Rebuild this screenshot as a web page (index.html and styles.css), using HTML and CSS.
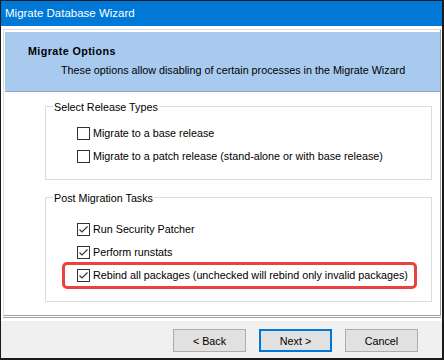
FILE: index.html
```html
<!DOCTYPE html>
<html>
<head>
<meta charset="utf-8">
<link rel="stylesheet" href="styles.css">
</head>
<body>
<div class="window">
  <div class="titlebar">Migrate Database Wizard</div>
  <div class="client">
    <div class="panel">
      <div class="header">
        <div class="header-title">Migrate Options</div>
        <div class="header-sub">These options allow disabling of certain processes in the Migrate Wizard</div>
      </div>
      <div class="group group-release">
        <div class="group-title">Select Release Types</div>
        <div class="rows rows-release">
          <div class="row"><span class="box"></span><span class="label">Migrate to a base release</span></div>
          <div class="row"><span class="box"></span><span class="label">Migrate to a patch release (stand-alone or with base release)</span></div>
        </div>
      </div>
      <div class="group group-post">
        <div class="group-title">Post Migration Tasks</div>
        <div class="rows rows-post">
          <div class="row"><span class="box checked"><svg viewBox="0 0 11 11" width="11" height="11"><polyline points="1.5,5.5 4,8 9.5,2.5" fill="none" stroke="#333" stroke-width="1.2"/></svg></span><span class="label">Run Security Patcher</span></div>
          <div class="row"><span class="box checked"><svg viewBox="0 0 11 11" width="11" height="11"><polyline points="1.5,5.5 4,8 9.5,2.5" fill="none" stroke="#333" stroke-width="1.2"/></svg></span><span class="label">Perform runstats</span></div>
          <div class="row row-highlight"><span class="box checked"><svg viewBox="0 0 11 11" width="11" height="11"><polyline points="1.5,5.5 4,8 9.5,2.5" fill="none" stroke="#333" stroke-width="1.2"/></svg></span><span class="label">Rebind all packages (unchecked will rebind only invalid packages)</span><span class="highlight"></span></div>
        </div>
      </div>
    </div>
    <div class="separator"></div>
    <div class="footer">
      <button class="btn">&lt; Back</button>
      <button class="btn btn-default">Next &gt;</button>
      <button class="btn">Cancel</button>
    </div>
  </div>
</div>
</body>
</html>
```
FILE: styles.css
```css
* { box-sizing: border-box; }
html, body { margin: 0; padding: 0; background: #fff; }
body { font-family: "Liberation Sans", Arial, sans-serif; font-size: 10.75px; color: #000; }

.window {
  width: 444px;
  height: 360px;
  border-top: 1px solid #1a1a1a;
  border-left: 1px solid #1a1a1a;
  border-right: 2px solid #1a1a1a;
  border-bottom: 2px solid #1a1a1a;
  background: #fff;
  display: flex;
  flex-direction: column;
}

.titlebar {
  height: 25px;
  flex: none;
  background: #0078d7;
  color: #fff;
  font-size: 11.5px;
  line-height: 25px;
  padding-left: 4px;
}

.client {
  flex: 1;
  display: flex;
  flex-direction: column;
  padding-top: 3px;
}

.panel {
  margin: 0 0 0 2px;
  border-top: 1px solid #dcdcdc;
  border-left: 1px solid #dcdcdc;
  border-right: 1px solid #a0a0a0;
  border-bottom: 1px solid #a0a0a0;
  padding-top: 2px;
  width: 438px;
  display: flex;
  flex-direction: column;
  flex: none;
}

.header {
  height: 60px;
  margin-left: 1px;
  background: #a9caef;
  border-bottom: 1px solid #8ea7c3;
  padding: 13px 0 0 23px;
}
.header-title { font-weight: bold; line-height: 13px; letter-spacing: 0.4px; }
.header-sub { line-height: 13px; margin: 6px 0 0 33px; }

.group {
  border: 1px solid #dcdcdc;
  margin: 14px 8px 0 41px;
  padding-left: 7px;
  display: flex;
  flex-direction: column;
}
.group-post { margin-top: 17px; margin-bottom: 13px; }
.group-title {
  align-self: flex-start;
  margin-top: -6px;
  padding: 0 1px;
  height: 13px;
  line-height: 13px;
  background: #fff;
}
.rows { display: flex; flex-direction: column; margin-left: 24px; }
.rows-release { padding: 8px 0 11px; }
.rows-post { padding: 13px 0 14px; }

.row {
  height: 23px;
  display: flex;
  align-items: center;
  position: relative;
}
.box {
  width: 13px;
  height: 13px;
  border: 1px solid #333;
  background: #fff;
  display: flex;
  align-items: center;
  justify-content: center;
  flex: none;
}
.label { margin-left: 3px; white-space: nowrap; line-height: 13px; }

.highlight {
  position: absolute;
  left: -15px;
  top: -2px;
  width: 355px;
  height: 27px;
  border: 3px solid #ec4141;
  border-radius: 5px;
  pointer-events: none;
}

.separator {
  margin: 1px 0 0 2px;
  width: 438px;
  height: 1px;
  flex: none;
  background: #a0a0a0;
}

.footer {
  margin-top: 3px;
  flex: 1;
  background: #f0f0f0;
  display: flex;
  justify-content: flex-end;
  align-items: flex-start;
  gap: 13px;
  padding: 8px 24px 0 0;
}
.btn {
  width: 73px;
  height: 23px;
  background: #e1e1e1;
  border: 1px solid #adadad;
  font-family: "Liberation Sans", Arial, sans-serif;
  font-size: 10.75px;
  color: #000;
  padding: 0;
  margin: 0;
}
.btn-default { border: 2px solid #0078d7; }
```
